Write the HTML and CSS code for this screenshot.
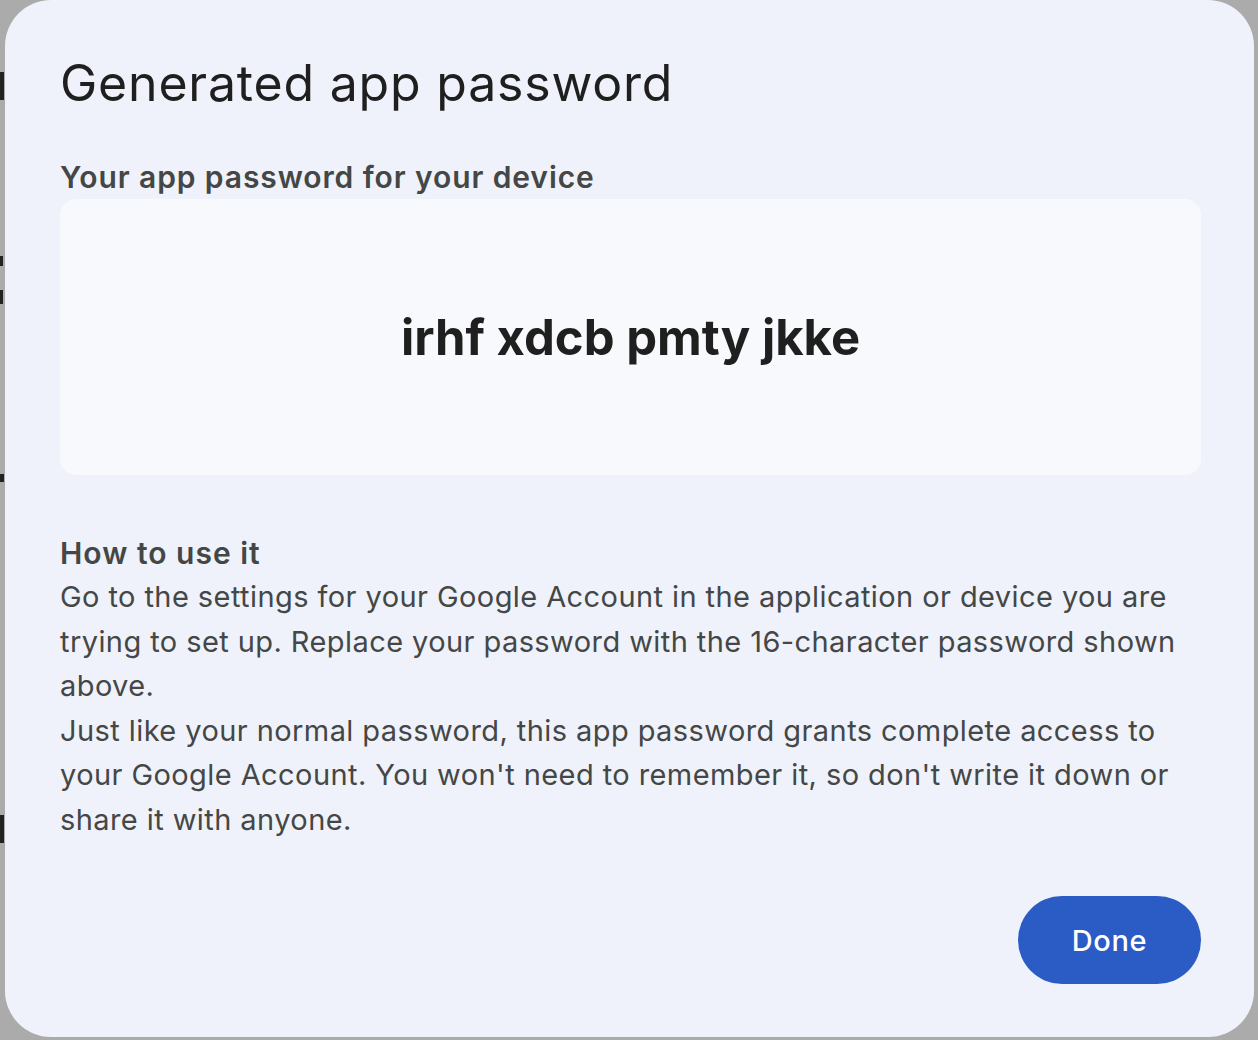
FILE: index.html
```html
<!DOCTYPE html>
<html lang="en">
<head>
<meta charset="utf-8">
<title>Generated app password</title>
<link rel="stylesheet" href="styles.css">
</head>
<body>
<div class="page">
  <div class="marks">
    <span class="mark m1"></span>
    <span class="mark m2"></span>
    <span class="mark m3"></span>
    <span class="mark m4"></span>
    <span class="mark m5"></span>
  </div>
  <div class="dialog">
    <h1 class="title">Generated app password</h1>
    <h2 class="label">Your app password for your device</h2>
    <div class="pwbox"><span class="pw">irhf xdcb pmty jkke</span></div>
    <h3 class="howto">How to use it</h3>
    <p class="body">Go to the settings for your Google Account in the application or device you are trying to set up. Replace your password with the 16-character password shown above.<br>Just like your normal password, this app password grants complete access to your Google Account. You won't need to remember it, so don't write it down or share it with anyone.</p>
    <div class="actions"><button class="done">Done</button></div>
  </div>
</div>
</body>
</html>
```
FILE: styles.css
```css
html, body {
  margin: 0;
  padding: 0;
  background: #ababab;
}
.page {
  position: relative;
  width: 1258px;
  height: 1040px;
  overflow: hidden;
  display: flex;
  padding-left: 5px;
  box-sizing: border-box;
}
.marks {
  position: absolute;
  left: 0;
  top: 0;
  width: 5px;
  height: 1040px;
}
.mark {
  position: absolute;
  left: 0;
  width: 4px;
  background: #222;
}
.m1 { top: 72px; height: 28px; }
.m2 { top: 256px; height: 10px; width: 3px; }
.m3 { top: 290px; height: 14px; width: 3px; }
.m4 { top: 474px; height: 8px; }
.m5 { top: 815px; height: 28px; }
.dialog {
  width: 1249px;
  height: 1037px;
  background: #eff2fa;
  border-radius: 46px;
  box-sizing: border-box;
  padding: 0 53px 0 55px;
  display: flex;
  flex-direction: column;
  font-family: "Inter", "Open Sans", sans-serif;
  color: #1f1f1f;
}
.title {
  margin: 48px 0 0 0;
  font-size: 50px;
  font-weight: 400;
  line-height: 70px;
  letter-spacing: 0.8px;
  color: #1f1f1f;
}
.label {
  margin: 39px 0 0 0;
  font-size: 30px;
  font-weight: 600;
  line-height: 40px;
  letter-spacing: 0.9px;
  color: #444746;
}
.pwbox {
  margin-top: 2px;
  height: 276px;
  background: #f8f9fd;
  border-radius: 16px;
  display: flex;
  align-items: center;
  justify-content: center;
}
.pw {
  font-size: 49px;
  font-weight: 700;
  color: #1f1f1f;
}
.howto {
  margin: 56px 0 0 0;
  font-size: 30px;
  font-weight: 600;
  line-height: 44px;
  letter-spacing: 1px;
  color: #444746;
}
.body {
  margin: 0;
  font-size: 29px;
  line-height: 44.5px;
  letter-spacing: 0.42px;
  color: #444746;
}
.actions {
  margin-top: auto;
  margin-bottom: 53px;
  display: flex;
  justify-content: flex-end;
}
.done {
  width: 183px;
  height: 88px;
  border: none;
  border-radius: 44px;
  background: #2b5bc4;
  color: #ffffff;
  font-family: "Inter", "Open Sans", sans-serif;
  font-size: 29px;
  font-weight: 500;
  letter-spacing: 0.6px;
}
```
